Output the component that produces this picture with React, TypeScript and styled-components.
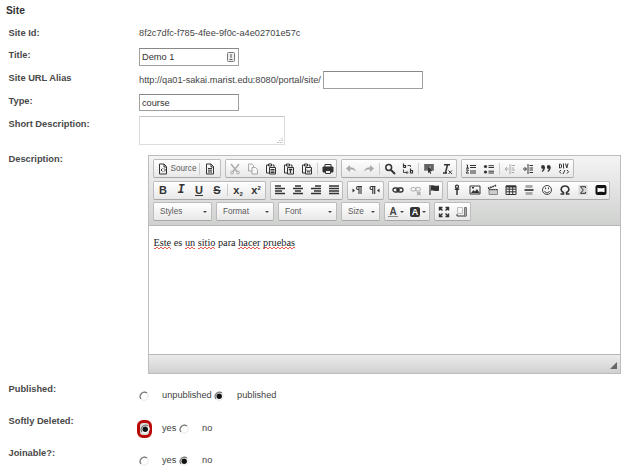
import React from "react";
import styled, { createGlobalStyle } from "styled-components";

const Global = createGlobalStyle`
  * { box-sizing: border-box; }
  body { margin: 0; background: #fff; font: 9.22px/12px "Liberation Sans", Arial, sans-serif; color: #444; }
`;

const Page = styled.main`
  width: 640px;
  height: 474px;
  overflow: hidden;
`;
const Heading = styled.h3`
  margin: 0;
  height: 22px;
  padding: 4px 0 0 6px;
  font-size: 10.3px;
  line-height: 13px;
  color: #333;
`;
const Row = styled.div<{ $h: number }>`
  display: grid;
  grid-template-columns: 130.5px 1fr;
  padding-left: 8.5px;
  height: ${(p) => p.$h}px;
`;
const Label = styled.label<{ $top: number }>`
  padding-top: ${(p) => p.$top}px;
  font-weight: bold;
  font-size: 9.3px;
  color: #484848;
  white-space: nowrap;
`;
const Field = styled.div<{ $top: number }>`
  display: flex;
  align-items: flex-start;
  padding-top: ${(p) => p.$top}px;
  white-space: nowrap;
`;
const Box = styled.div<{ $h?: number }>`
  display: flex;
  align-items: center;
  justify-content: space-between;
  width: 100px;
  height: ${(p) => p.$h ?? 18}px;
  padding: 0 3px 0 2px;
  border: 1px solid #a0a0a0;
  border-top-color: #888;
  color: #333;
`;
const Url = styled.span`
  width: 184px;
  padding-top: 3px;
`;
const Area = styled.div`
  display: flex;
  align-items: flex-end;
  justify-content: flex-end;
  width: 146px;
  height: 29px;
  border: 1px solid #ddd;
  border-top-color: #c4c4c4;
`;

const Editor = styled.section`
  width: 473px;
  height: 219px;
  margin-left: 9px;
  border: 1px solid #bdbdbd;
  display: flex;
  flex-direction: column;
`;
const Toolbar = styled.div`
  height: 70px;
  padding: 3px 5px 0 4px;
  display: flex;
  flex-direction: column;
  gap: 2.5px;
  background: linear-gradient(#f4f4f4, #cfd1cf);
  border-bottom: 1px solid #b6b6b6;
`;
const Line = styled.div`
  display: flex;
  gap: 4px;
`;
const Group = styled.div<{ $w: number }>`
  display: flex;
  align-items: center;
  justify-content: center;
  width: ${(p) => p.$w}px;
  height: 19px;
  border: 1px solid #bcbcbc;
  border-bottom-color: #a8a8a8;
  border-radius: 2px;
  background: linear-gradient(#fff, #e8e8e8);
`;
const Tool = styled.span<{ $dim?: boolean; $w?: number }>`
  display: flex;
  flex: none;
  align-items: center;
  justify-content: center;
  gap: 2px;
  width: ${(p) => p.$w ?? 18}px;
  color: #333;
  opacity: ${(p) => (p.$dim ? 0.38 : 1)};
  svg { display: block; flex: none; }
`;
const Sep = styled.i`
  flex: none;
  width: 1px;
  height: 12px;
  margin: 0 1px;
  background: #ccc;
`;
const Caption = styled.span`
  font-size: 8.2px;
  color: #5a5a5a;
`;
const Combo = styled(Group)`
  justify-content: space-between;
  padding: 0 4px 0 6px;
`;
const Caret = styled.i`
  border: 2px solid transparent;
  border-top: 2.5px solid #444;
  border-bottom: 0;
`;
const Content = styled.div`
  flex: 1;
  padding: 10px 5px 10px 4.500px;
  font: 10.27px/13px "Liberation Serif", "Times New Roman", serif;
  color: #222;
`;
const Misspelt = styled.span`
  padding-bottom: 1px;
  background:
    linear-gradient(90deg, #e65b52 50%, transparent 50%) 0 100% / 4px 1px repeat-x,
    linear-gradient(90deg, transparent 50%, #e65b52 50%) 0 calc(100% - 1px) / 4px 1px repeat-x;
`;
const Footer = styled.div`
  height: 19px;
  display: flex;
  align-items: flex-end;
  justify-content: flex-end;
  padding: 0 3px 4px 0;
  border-top: 1px solid #b6b6b6;
  background: linear-gradient(#ebebeb, #cfd1cf);
`;
const Choice = styled.span<{ $w: number }>`
  display: flex;
  align-items: flex-start;
  width: ${(p) => p.$w}px;
  gap: 13px;
`;
const RadioSlot = styled.span<{ $marked?: boolean }>`
  display: flex;
  align-items: center;
  justify-content: center;
  width: ${(p) => (p.$marked ? 15 : 10)}px;
  height: ${(p) => (p.$marked ? 18 : 10)}px;
  margin: ${(p) => (p.$marked ? "-2px -3px -5px -2px" : "2px 0 0")};
  border: ${(p) => (p.$marked ? "3px solid #b90a0a" : "0")};
  border-radius: 6px;
  background: ${(p) => (p.$marked ? "#ddd" : "none")};
  svg { flex: none; }
`;

const page = "M2.5 1H7l2.5 2.5V11h-7z M7 1v3h2.5";
const clip = "M3 2H1.5v8H4M7.500 2H9v2M3.500 1h3v2h-3z M4.500 4.500h6v6.500h-6z";

const art: Record<string, React.ReactNode> = {
  source: <><path d={page} /><path d="M5.500 5.500L4 7l1.500 1.500M7 5.500L8.500 7L7 8.500" /></>,
  doc: <><path d={page} /><path d="M4 5.500h4M4 7.200h4M4 9h4" /></>,
  cut: <><path d="M2 1l6 7.500M10 1L4 8.500" strokeWidth="1.400" /><circle cx="3" cy="9.500" r="1.400" /><circle cx="9" cy="9.500" r="1.400" /></>,
  copy: <><path d="M1.500 1h3.500l1.500 1.500V8h-5z" /><path d="M5 4.500h3.500l2 2V11H5z" fill="#fff" /></>,
  paste: <><path d={clip} /><path d="M5.500 6.500h4M5.500 8h4M5.500 9.500h4" /></>,
  pasteText: <><path d={clip} /><path d="M5.800 6.500h3.500M7.500 6.500V10" strokeWidth="1.300" /></>,
  pasteWord: <><path d={clip} /><path d="M5.700 6.500l1 3 .9-2 .9 2 1-3" strokeWidth=".8" /></>,
  print: <><path d="M3 4V1.500h6V4" /><path d="M1 4h10v5H9V7.500H3V9H1z" fill="currentColor" /><path d="M3.500 8v2.500h5V8" /></>,
  undo: <path d="M5 2v2.200c3 0 5 1.300 6 4.300-1.700-1.700-3.500-2-6-2V9L1 5.500z" fill="currentColor" stroke="none" />,
  redo: <path d="M7 2v2.200C4 4.200 2 5.500 1 8.500c1.700-1.700 3.500-2 6-2V9l4-3.500z" fill="currentColor" stroke="none" />,
  find: <><circle cx="4.700" cy="4.500" r="2.900" strokeWidth="1.500" /><path d="M7 7l4 4" strokeWidth="2" /></>,
  replace: <><path d="M1.500 .5v4M1.500 2.500h2v2h-2M8.500 5.500v4.500h2V7.500h-2" strokeWidth="1.200" /><path d="M5.500 2.500h3v1.500M1.500 6.500v3h4M4.500 8l1.500 1.500L4.500 11" strokeWidth=".9" /></>,
  selectAll: <><path d="M1 1h10v7H1z" fill="#999" stroke="none" /><path d="M1.500 2h9M1.500 4h5M8 4h2.500M1.500 6h9" /><path d="M5 4l4.500 4-2.200.3 1 2-1 .7-1-2L5 10.300z" fill="currentColor" stroke="none" /></>,
  removeFormat: <><path d="M3 1.700h6M6.500 1.700l-2 8M2 10h4" strokeWidth="1.500" /><path d="M7.500 7.500l3.500 3.500M11 7.500L7.500 11" /></>,
  ol: <><path d="M1.500 2h1v3M1 5.200h3M1 7h2.500L1 10h3" /><path d="M5 2.500h6M5 4.500h6M5 8h6M5 10h6" /></>,
  ul: <><circle cx="2.500" cy="3.500" r="1.600" fill="currentColor" stroke="none" /><circle cx="2.500" cy="9" r="1.600" fill="currentColor" stroke="none" /><path d="M5.500 2.700h5.500M5.500 4.500h5.500M5.500 8.200h5.500M5.500 10h5.500" /></>,
  outdent: <path d="M6 1v10M7.500 2.500H11M7.500 5H10M7.500 7H11M7.500 9.500H10M4.500 6H1M3 4L1 6l2 2" />,
  indent: <path d="M6 1v10M7.500 2.500H11M7.500 5H11M7.500 7H11M7.500 9.500H11M1 6h3M2.500 4l2 2-2 2" />,
  quote: <><circle cx="3" cy="4" r="1.900" fill="currentColor" stroke="none" /><circle cx="8.700" cy="4" r="1.900" fill="currentColor" stroke="none" /><path d="M4.300 4Q4.500 7 2 8.500M10 4Q10.200 7 7.700 8.500" strokeWidth="1.200" /></>,
  div: <path d="M1.500 1v4h1l1-1V2l-1-1zM5.500 .5v5M7.500 .5l1.300 4.500L10 .5M3 7L1.500 8.700 3 10.500M9 7l1.500 1.700L9 10.500M7 7l-2 4" />,
  left: <path d="M1 2h6M1 4.500h10M1 7h7M1 9.500h10" strokeWidth="1.500" />,
  center: <path d="M3 2h6M1 4.500h10M3 7h6M1 9.500h10" strokeWidth="1.500" />,
  right: <path d="M5 2h6M1 4.500h10M4 7h7M1 9.500h10" strokeWidth="1.500" />,
  justify: <path d="M1 2h10M1 4.500h10M1 7h10M1 9.500h10" strokeWidth="1.500" />,
  ltr: <><path d="M1.500 4.500L4 6.500 1.500 8.500z" fill="currentColor" stroke="none" /><path d="M11 2.500H7a1.500 1.500 0 000 3h1M8 2.500V10M10 2.500V10" strokeWidth="1.100" /></>,
  rtl: <><path d="M10.500 4.500L8 6.500 10.500 8.500z" fill="currentColor" stroke="none" /><path d="M6.500 2.500h-4a1.500 1.500 0 000 3h1M3.800 2.500V10M5.700 2.500V10" strokeWidth="1.100" /></>,
  link: <><rect x="1" y="4" width="5.500" height="4" rx="2" strokeWidth="1.300" /><rect x="5.500" y="4" width="5.500" height="4" rx="2" strokeWidth="1.300" /><path d="M4 6h4" strokeWidth="1.400" /></>,
  unlink: <><rect x="1" y="3.500" width="5" height="3.500" rx="1.700" /><rect x="5.500" y="3.500" width="5" height="3.500" rx="1.700" /><path d="M7 8l3.500 3M10.500 8L7 11" strokeWidth="1.200" /></>,
  flag: <><path d="M2 1v10" strokeWidth="1.200" /><path d="M3 1.500c2-.8 3 .8 8 0v5.300c-5 .8-6-.8-8 0z" fill="currentColor" stroke="none" /></>,
  pin: <><circle cx="6" cy="2.700" r="1.500" strokeWidth="1.300" /><path d="M6 4v7M3.800 5.200h4.400" strokeWidth="1.500" /></>,
  image: <><path d="M1 2h10v8H1z" /><path d="M2 9l2.500-3L6 7.500 8 5l2.500 4zM3 3h2v1.500H3z" fill="currentColor" stroke="none" /></>,
  movie: <><path d="M2 5.500h8.500v5H2z" fill="#ccc" stroke="#888" /><path d="M1 4.300l8.500-3" strokeWidth="1.800" strokeDasharray="1.600 .7" /><path d="M2 5.700h8.500" strokeDasharray="1.600 .7" /></>,
  table: <><path d="M1 2h10v8.500H1zM1 5.200h10M1 7.800h10M4.300 2v8.500M7.700 2v8.500" /><path d="M1 1.500h10v2H1z" fill="currentColor" stroke="none" /></>,
  rule: <><path d="M2.500 1h7v3h-7zM2.500 8h7v3h-7z" fill="#aaa" stroke="none" /><path d="M1.500 6h9" strokeWidth="1.700" /></>,
  smile: <><circle cx="6" cy="6" r="4.500" strokeWidth=".9" /><path d="M3.500 7c1 2.400 4 2.400 5 0M4.500 3.500v1.700M7.500 3.500v1.700" /></>,
  omega: <path d="M1.500 10h3V8.500C.5 6.500 2 2 6 2s5.500 4.500 1.500 6.500V10h3" strokeWidth="1.500" />,
  sigma: <><path d="M1.500 1h9v10h-9z" fill="#d8d8d8" stroke="none" /><path d="M8.500 4V2.700h-5L6.300 6 3.500 9.300h5V8" /></>,
  media: <><rect x=".5" y="1" width="11" height="10" rx="2" fill="#111" stroke="none" /><path d="M2.500 3.700l2 .6h3l2-.6v4.600l-2-.6h-3l-2 .6z" fill="#fff" stroke="none" /></>,
  maximize: <path d="M4.500 4.500L2 2M7.500 4.500L10 2M4.500 7.500L2 10M7.500 7.500L10 10M1.500 4.500v-3h3M7.500 1.500h3v3M1.500 7.500v3h3M7.500 10.500h3v-3" strokeWidth="1.400" />,
  blocks: <><path d="M1.500 1.500h5v6h-5z" stroke="#bbb" /><path d="M1 10h9M1 8v2" /><path d="M8.500 1.500h2V10h-2z" fill="#aaa" stroke="#777" /></>,
};

const Icon = ({ name }: { name: string }) => (
  <svg width="12" height="12" viewBox="0 0 12 12" fill="none" stroke="currentColor">
    {art[name]}
  </svg>
);

const Glyph = styled.span<{ $kind: string }>`
  font: ${(p) => (p.$kind === "I" ? 'italic bold 12px/13px "Liberation Mono", monospace' : 'bold 11px/13px "Liberation Sans", sans-serif')};
  text-decoration: ${(p) => (p.$kind === "U" ? "underline" : p.$kind === "S" ? "line-through" : "none")};
  text-decoration-thickness: 1px;
  text-underline-offset: 1px;
`;
const Script = styled.span<{ $up?: boolean }>`
  font: bold 11px/13px "Liberation Sans", sans-serif;
  small { font-size: 6px; line-height: 0; vertical-align: ${(p) => (p.$up ? "4px" : "-2px")}; }
`;
const Swatch = styled.span<{ $solid?: boolean }>`
  width: 10px;
  height: 10px;
  text-align: center;
  font: bold ${(p) => (p.$solid ? 9 : 10)}px/${(p) => (p.$solid ? 10 : 9)}px "Liberation Sans", sans-serif;
  border-radius: ${(p) => (p.$solid ? 2 : 0)}px;
  border-bottom: ${(p) => (p.$solid ? "0" : "1px solid #888")};
  background: ${(p) => (p.$solid ? "#333" : "none")};
  color: ${(p) => (p.$solid ? "#fff" : "#444")};
`;

const Tools = ({ w, items }: { w: number; items: string }) => (
  <Group $w={w}>
    {items.split(" ").map((it, i) =>
      it === "|" ? <Sep key={i} /> : (
        <Tool key={i} $dim={it.startsWith("-")}><Icon name={it.replace("-", "")} /></Tool>
      ),
    )}
  </Group>
);

const Radio = ({ on, marked }: { on?: boolean; marked?: boolean }) => (
  <RadioSlot $marked={marked}>
    <svg width="10" height="10" viewBox="0 0 10 10" fill="none">
      <circle cx="5" cy="5" r="4.300" fill="#fff" stroke="#e8e8e8" />
      <path d="M2 8A4.300 4.300 0 018 2" stroke="#777" strokeWidth="1.200" />
      {on && <circle cx="5.200" cy="5.200" r="2.700" fill="#111" />}
    </svg>
  </RadioSlot>
);

const Choices = ({ first, second, on, gap, marked }: { first: string; second: string; on: number; gap: number; marked?: boolean }) => (
  <>
    <Choice $w={gap}><Radio on={on === 0} marked={marked} />{first}</Choice>
    <Choice $w={80}><Radio on={on === 1} />{second}</Choice>
  </>
);

export default function App() {
  return (
    <Page>
      <Global />
      <Heading>Site</Heading>
      <Row $h={22}>
        <Label $top={5}>Site Id:</Label>
        <Field $top={5}>8f2c7dfc-f785-4fee-9f0c-a4e02701e57c</Field>
      </Row>
      <Row $h={24}>
        <Label $top={5}>Title:</Label>
        <Field $top={4}>
          <Box>
            Demo 1
            <svg width="8" height="10" viewBox="0 0 8 10" fill="none" stroke="#777">
              <rect x=".5" y=".5" width="7" height="9" rx="1" fill="#eee" />
              <path d="M4 2v4M2.500 7.500h3" stroke="#555" />
            </svg>
          </Box>
        </Field>
      </Row>
      <Row $h={23}>
        <Label $top={4}>Site URL Alias</Label>
        <Field $top={3}><Url>http://qa01-sakai.marist.edu:8080/portal/site/</Url><Box /></Field>
      </Row>
      <Row $h={23}>
        <Label $top={4}>Type:</Label>
        <Field $top={3}><Box $h={17}>course</Box></Field>
      </Row>
      <Row $h={36}>
        <Label $top={4}>Short Description:</Label>
        <Field $top={2}>
          <Area>
            <svg width="8" height="8" viewBox="0 0 8 8" stroke="#bbb"><path d="M1 6.500h6M3 4.500h4M5 2.500h2" strokeDasharray="1 .5" /></svg>
          </Area>
        </Field>
      </Row>
      <Row $h={228}>
        <Label $top={3}>Description:</Label>
        <Field $top={5}>
          <Editor>
            <Toolbar>
              <Line>
                <Group $w={68}>
                  <Tool $w={43}><Icon name="source" /><Caption>Source</Caption></Tool>
                  <Sep />
                  <Tool><Icon name="doc" /></Tool>
                </Group>
                <Tools w={112} items="-cut -copy paste pasteText pasteWord | print" />
                <Tools w={116} items="-undo -redo | find replace | selectAll removeFormat" />
                <Tools w={113} items="ol ul | -outdent indent quote div" />
              </Line>
              <Line>
                <Group $w={113}>
                  {["B", "I", "U", "S"].map((g) => <Tool key={g}><Glyph $kind={g}>{g}</Glyph></Tool>)}
                  <Sep />
                  <Tool><Script>x<small>2</small></Script></Tool>
                  <Tool><Script $up>x<small>2</small></Script></Tool>
                </Group>
                <Tools w={73} items="left center right justify" />
                <Tools w={37} items="ltr rtl" />
                <Tools w={55} items="link -unlink flag" />
                <Tools w={163} items="pin image movie table rule smile omega sigma media" />
              </Line>
              <Line>
                <Combo $w={59}><Caption>Styles</Caption><Caret /></Combo>
                <Combo $w={58}><Caption>Format</Caption><Caret /></Combo>
                <Combo $w={59}><Caption>Font</Caption><Caret /></Combo>
                <Combo $w={39}><Caption>Size</Caption><Caret /></Combo>
                <Group $w={46}>
                  <Tool $w={22}><Swatch>A</Swatch><Caret /></Tool>
                  <Tool $w={22}><Swatch $solid>A</Swatch><Caret /></Tool>
                </Group>
                <Tools w={37} items="maximize blocks" />
              </Line>
            </Toolbar>
            <Content>
              <Misspelt>Este</Misspelt> es <Misspelt>un</Misspelt> <Misspelt>sitio</Misspelt> para <Misspelt>hacer</Misspelt> <Misspelt>pruebas</Misspelt>
            </Content>
            <Footer>
              <svg width="7" height="7" viewBox="0 0 7 7"><path d="M7 0v7H0z" fill="#666" /></svg>
            </Footer>
          </Editor>
        </Field>
      </Row>
      <Row $h={32}>
        <Label $top={5}>Published:</Label>
        <Field $top={11}><Choices first="unpublished" second="published" on={1} gap={75} /></Field>
      </Row>
      <Row $h={33}>
        <Label $top={5}>Softly Deleted:</Label>
        <Field $top={12}><Choices first="yes" second="no" on={0} gap={40} marked /></Field>
      </Row>
      <Row $h={31}>
        <Label $top={4}>Joinable?:</Label>
        <Field $top={11}><Choices first="yes" second="no" on={1} gap={40} /></Field>
      </Row>
    </Page>
  );
}
